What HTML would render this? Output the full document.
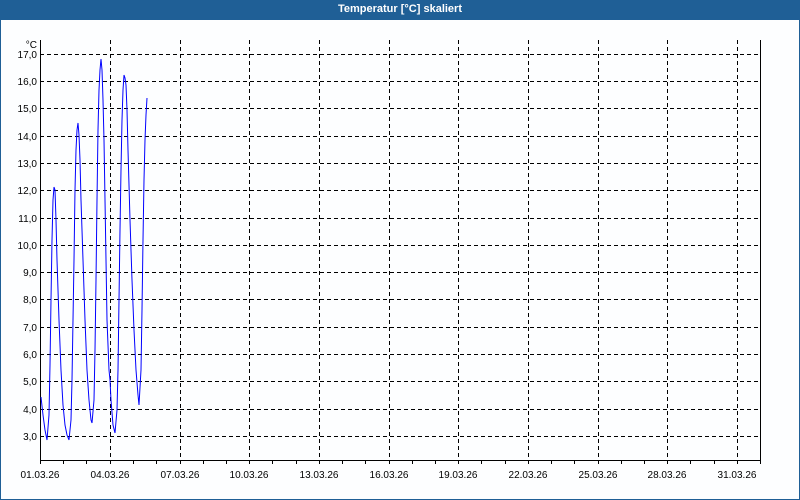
<!DOCTYPE html>
<html><head><meta charset="utf-8"><style>
body{margin:0;width:800px;height:500px;overflow:hidden;background:#fff;font-family:"Liberation Sans",sans-serif}
.frame{position:absolute;left:0;top:0;width:798px;height:498px;border:1px solid #1f5f96;background:#fdfeff}
.title{position:absolute;left:0;top:0;width:800px;height:20px;background:#1f5f96;color:#fff;font-weight:bold;font-size:11px;text-align:center;line-height:19px}
</style></head><body>
<div class="frame"></div>
<div class="title">Temperatur [°C] skaliert</div>
<svg width="800" height="500" style="position:absolute;left:0;top:0" font-family="Liberation Sans, sans-serif" font-size="10">
<g stroke="#000" stroke-width="1" stroke-dasharray="4,3" shape-rendering="crispEdges">
<line x1="40" x2="760" y1="54.5" y2="54.5"/><line x1="40" x2="760" y1="81.5" y2="81.5"/><line x1="40" x2="760" y1="108.5" y2="108.5"/><line x1="40" x2="760" y1="136.5" y2="136.5"/><line x1="40" x2="760" y1="163.5" y2="163.5"/><line x1="40" x2="760" y1="190.5" y2="190.5"/><line x1="40" x2="760" y1="218.5" y2="218.5"/><line x1="40" x2="760" y1="245.5" y2="245.5"/><line x1="40" x2="760" y1="272.5" y2="272.5"/><line x1="40" x2="760" y1="299.5" y2="299.5"/><line x1="40" x2="760" y1="327.5" y2="327.5"/><line x1="40" x2="760" y1="354.5" y2="354.5"/><line x1="40" x2="760" y1="381.5" y2="381.5"/><line x1="40" x2="760" y1="409.5" y2="409.5"/><line x1="40" x2="760" y1="436.5" y2="436.5"/>
<line x1="110.5" x2="110.5" y1="40" y2="460"/><line x1="180.5" x2="180.5" y1="40" y2="460"/><line x1="249.5" x2="249.5" y1="40" y2="460"/><line x1="319.5" x2="319.5" y1="40" y2="460"/><line x1="389.5" x2="389.5" y1="40" y2="460"/><line x1="458.5" x2="458.5" y1="40" y2="460"/><line x1="528.5" x2="528.5" y1="40" y2="460"/><line x1="598.5" x2="598.5" y1="40" y2="460"/><line x1="667.5" x2="667.5" y1="40" y2="460"/><line x1="737.5" x2="737.5" y1="40" y2="460"/>
</g>
<g stroke="#000" stroke-width="1" shape-rendering="crispEdges">
<line x1="40.5" x2="40.5" y1="40" y2="461"/><line x1="40" x2="761" y1="460.5" y2="460.5"/><line x1="760.5" x2="760.5" y1="40" y2="461"/>
<path d="M63.5 460v4M86.5 460v4M110.5 460v4M133.5 460v4M156.5 460v4M180.5 460v4M203.5 460v4M226.5 460v4M249.5 460v4M272.5 460v4M296.5 460v4M319.5 460v4M342.5 460v4M365.5 460v4M389.5 460v4M412.5 460v4M435.5 460v4M458.5 460v4M481.5 460v4M505.5 460v4M528.5 460v4M551.5 460v4M574.5 460v4M598.5 460v4M621.5 460v4M644.5 460v4M667.5 460v4M690.5 460v4M714.5 460v4M737.5 460v4M760.5 460v4M40.5 460v4"/>
</g>
<polyline fill="none" stroke="#0000ff" stroke-width="1" points="41,397 43,415 45,430 47,440 49,415 50,365 51,300 52,240 53,200 54,187 55,190 56,220 57,260 59,320 61,370 63,405 65,425 67,435 69,440 71,420 72,380 73,320 74,260 75,190 76,150 77,130 78,123 79,135 80,160 81,200 83,260 85,320 87,370 89,400 91,420 92,423 94,400 95,350 96,280 97,200 98,130 99,90 100,70 101,59 102,70 103,100 104,140 105,200 106,260 107,320 109,370 110,380 111,400 113,425 115,433 117,410 118,370 119,300 120,230 121,170 122,120 123,90 124,75 125,78 126,85 127,110 128,150 130,220 132,280 134,330 136,370 138,395 139,405 141,370 142,310 143,240 144,180 145,140 146,115 147,98"/>
<g fill="#000" text-anchor="end">
<text x="37" y="48">°C</text>
<text x="37" y="58">17,0</text><text x="37" y="85">16,0</text><text x="37" y="112">15,0</text><text x="37" y="140">14,0</text><text x="37" y="167">13,0</text><text x="37" y="194">12,0</text><text x="37" y="222">11,0</text><text x="37" y="249">10,0</text><text x="37" y="276">9,0</text><text x="37" y="303">8,0</text><text x="37" y="331">7,0</text><text x="37" y="358">6,0</text><text x="37" y="385">5,0</text><text x="37" y="413">4,0</text><text x="37" y="440">3,0</text>
</g>
<g fill="#000" text-anchor="middle">
<text x="40" y="478">01.03.26</text><text x="110" y="478">04.03.26</text><text x="180" y="478">07.03.26</text><text x="249" y="478">10.03.26</text><text x="319" y="478">13.03.26</text><text x="389" y="478">16.03.26</text><text x="458" y="478">19.03.26</text><text x="528" y="478">22.03.26</text><text x="598" y="478">25.03.26</text><text x="667" y="478">28.03.26</text><text x="737" y="478">31.03.26</text>
</g>
</svg>
</body></html>
